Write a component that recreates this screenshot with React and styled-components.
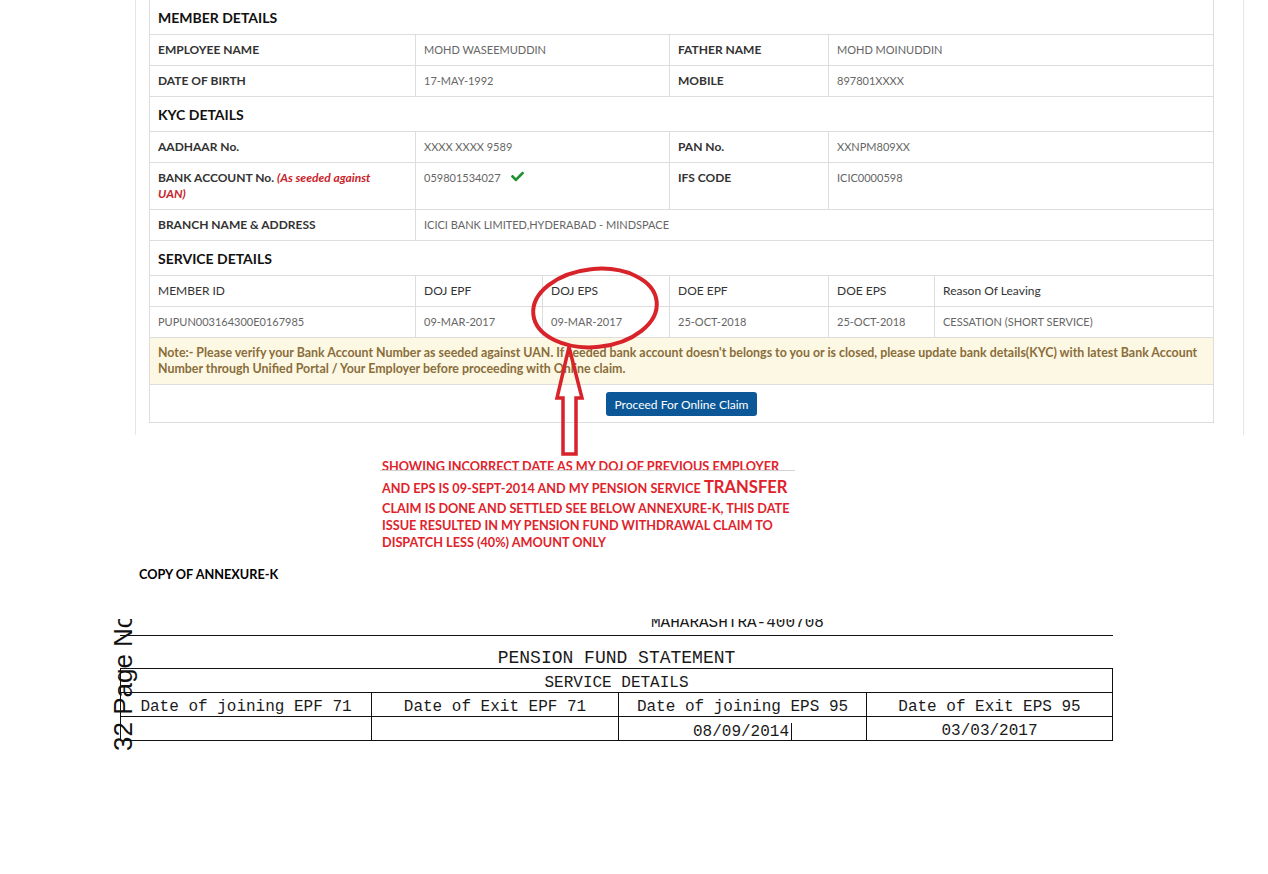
import React from "react";
import styled, { createGlobalStyle } from "styled-components";
import { FaCheck } from "react-icons/fa";

const Global = createGlobalStyle`
  html, body { margin: 0; padding: 0; background: #fff; }
  body { font-family: Lato, "Open Sans", sans-serif; }
  * { box-sizing: content-box; }
`;

const Canvas = styled.div`
  position: relative;
  width: 1268px;
  height: 874px;
  overflow: hidden;
  background: #fff;
`;

const TopPage = styled.div`
  margin-left: 135px;
  width: 1065px;
  border-left: 1px solid #e6e6e6;
  border-right: 1px solid #e6e6e6;
  padding: 0 29px 12px 13px;
`;

const Panel = styled.div`
  border: 1px solid #ddd;
  border-top: none;
  font-size: 12px;
`;

const SectionHead = styled.div`
  height: 34px;
  padding: 0 8px;
  display: flex;
  align-items: center;
  font-weight: 700;
  font-size: 14px;
  color: #111;
  border-top: ${(p) => (p.$first ? "none" : "1px solid #ddd")};
`;

const Row = styled.div`
  display: grid;
  grid-template-columns: ${(p) => p.$cols};
  border-top: 1px solid #ddd;
`;

const Cell = styled.div`
  padding: 7px 8px;
  line-height: 16px;
  font-size: ${(p) => (p.$kind === "label" || p.$kind === "head" ? 12 : 11)}px;
  font-weight: ${(p) => (p.$kind === "label" ? 700 : 400)};
  color: ${(p) =>
    p.$kind === "label" ? "#333" : p.$kind === "head" ? "#333" : "#666"};
  grid-column: ${(p) => p.$span || "auto"};
  white-space: nowrap;
  & + & {
    border-left: 1px solid #ddd;
  }
`;

const Seeded = styled.span`
  color: #c9232b;
  font-style: italic;
`;

const Tick = styled(FaCheck)`
  color: #21912f;
  margin-left: 10px;
  vertical-align: -1px;
`;

const Note = styled.div`
  border-top: 1px solid #ddd;
  background: #fcf8e3;
  padding: 7px 8px;
  line-height: 16px;
  font-size: 12.4px;
  font-weight: 700;
  color: #8a6d3b;
  white-space: nowrap;
`;

const ButtonRow = styled.div`
  border-top: 1px solid #ddd;
  padding: 7px 0 6px;
  display: flex;
  justify-content: center;
`;

const ClaimButton = styled.button`
  height: 24px;
  width: 151px;
  padding: 0;
  border: none;
  border-radius: 3px;
  background: #0b5797;
  color: #fff;
  font-family: Lato, "Open Sans", sans-serif;
  font-size: 12px;
`;

const Annotation = styled.div`
  position: relative;
  margin: 23px 0 0 382px;
  color: #e0232b;
  font-weight: 700;
  font-size: 12.7px;
`;

const AnnLine = styled.div`
  height: ${(p) => p.$h || 17}px;
  line-height: ${(p) => p.$h || 17}px;
  white-space: nowrap;
`;

const Big = styled.span`
  font-size: 16.6px;
`;

const StrikeLine = styled.div`
  position: absolute;
  left: -2px;
  top: 12px;
  width: 415px;
  height: 1px;
  background: #d2d2d2;
`;

const CopyTitle = styled.div`
  margin: 15px 0 0 139px;
  line-height: 17px;
  font-size: 12.7px;
  font-weight: 700;
  color: #000;
`;

const Scan = styled.div`
  position: relative;
  margin-top: 36px;
  height: 255px;
  overflow: hidden;
  font-family: "Liberation Mono", "Courier New", monospace;
  color: #1a1a1a;
`;

const ScanBody = styled.div`
  margin-left: 120px;
  width: 993px;
`;

const AddressLine = styled.div`
  margin-top: -5px;
  padding: 0 0 3px 531px;
  height: 18px;
  font-size: 16px;
  line-height: 18px;
  border-bottom: 1px solid #111;
`;

const StatementTitle = styled.div`
  padding-top: 12px;
  height: 20px;
  text-align: center;
  font-size: 18px;
  line-height: 20px;
`;

const ScanTable = styled.div`
  border: 1px solid #111;
  font-size: 16px;
`;

const ScanRow = styled.div`
  display: grid;
  grid-template-columns: ${(p) => p.$cols || "1fr"};
  & + & {
    border-top: 1px solid #111;
  }
`;

const ScanCell = styled.div`
  height: ${(p) => 23 - (p.$pt ?? 6)}px;
  padding-top: ${(p) => p.$pt ?? 6}px;
  line-height: 17px;
  text-align: center;
  white-space: nowrap;
  & + & {
    border-left: 1px solid #111;
  }
`;

const Caret = styled.span`
  display: inline-block;
  width: 0;
  height: 17px;
  margin-left: 2px;
  border-left: 1px solid #111;
  vertical-align: -4px;
`;

const PageStamp = styled.div`
  position: absolute;
  left: 110px;
  top: -18px;
  width: 26px;
  height: 150px;
  writing-mode: vertical-rl;
  transform: rotate(180deg);
  font-family: "Liberation Sans", Arial, sans-serif;
  font-size: 26px;
  line-height: 26px;
  white-space: nowrap;
  color: #111;
`;

const Markup = styled.svg`
  position: absolute;
  left: 0;
  top: 0;
  pointer-events: none;
`;

const FOUR = "265px 254px 159px 1fr";
const SIX = "265px 127px 127px 159px 106px 1fr";

export default function App() {
  return (
    <Canvas>
      <Global />
      <TopPage>
        <Panel>
          <SectionHead $first>MEMBER DETAILS</SectionHead>
          <Row $cols={FOUR}>
            <Cell $kind="label">EMPLOYEE NAME</Cell>
            <Cell>MOHD WASEEMUDDIN</Cell>
            <Cell $kind="label">FATHER NAME</Cell>
            <Cell>MOHD MOINUDDIN</Cell>
          </Row>
          <Row $cols={FOUR}>
            <Cell $kind="label">DATE OF BIRTH</Cell>
            <Cell>17-MAY-1992</Cell>
            <Cell $kind="label">MOBILE</Cell>
            <Cell>897801XXXX</Cell>
          </Row>
          <SectionHead>KYC DETAILS</SectionHead>
          <Row $cols={FOUR}>
            <Cell $kind="label">AADHAAR No.</Cell>
            <Cell>XXXX XXXX 9589</Cell>
            <Cell $kind="label">PAN No.</Cell>
            <Cell>XXNPM809XX</Cell>
          </Row>
          <Row $cols={FOUR}>
            <Cell $kind="label">
              BANK ACCOUNT No. <Seeded>(As seeded against</Seeded>
              <br />
              <Seeded>UAN)</Seeded>
            </Cell>
            <Cell>
              059801534027
              <Tick size={13} />
            </Cell>
            <Cell $kind="label">IFS CODE</Cell>
            <Cell>ICIC0000598</Cell>
          </Row>
          <Row $cols={FOUR}>
            <Cell $kind="label">BRANCH NAME &amp; ADDRESS</Cell>
            <Cell $span="2 / 5">ICICI BANK LIMITED,HYDERABAD - MINDSPACE</Cell>
          </Row>
          <SectionHead>SERVICE DETAILS</SectionHead>
          <Row $cols={SIX}>
            <Cell $kind="head">MEMBER ID</Cell>
            <Cell $kind="head">DOJ EPF</Cell>
            <Cell $kind="head">DOJ EPS</Cell>
            <Cell $kind="head">DOE EPF</Cell>
            <Cell $kind="head">DOE EPS</Cell>
            <Cell $kind="head">Reason Of Leaving</Cell>
          </Row>
          <Row $cols={SIX}>
            <Cell>PUPUN003164300E0167985</Cell>
            <Cell>09-MAR-2017</Cell>
            <Cell>09-MAR-2017</Cell>
            <Cell>25-OCT-2018</Cell>
            <Cell>25-OCT-2018</Cell>
            <Cell>CESSATION (SHORT SERVICE)</Cell>
          </Row>
          <Note>
            Note:- Please verify your Bank Account Number as seeded against UAN. If seeded bank account doesn't belongs to you or is closed, please update bank details(KYC) with latest Bank Account
            <br />
            Number through Unified Portal / Your Employer before proceeding with Online claim.
          </Note>
          <ButtonRow>
            <ClaimButton type="button">Proceed For Online Claim</ClaimButton>
          </ButtonRow>
        </Panel>
      </TopPage>

      <Annotation>
        <StrikeLine />
        <AnnLine>SHOWING INCORRECT DATE AS MY DOJ OF PREVIOUS EMPLOYER</AnnLine>
        <AnnLine $h={25}>
          AND EPS IS 09-SEPT-2014 AND MY PENSION SERVICE <Big>TRANSFER</Big>
        </AnnLine>
        <AnnLine>CLAIM IS DONE AND SETTLED SEE BELOW ANNEXURE-K, THIS DATE</AnnLine>
        <AnnLine>ISSUE RESULTED IN MY PENSION FUND WITHDRAWAL CLAIM TO</AnnLine>
        <AnnLine>DISPATCH LESS (40%) AMOUNT ONLY</AnnLine>
      </Annotation>

      <CopyTitle>COPY OF ANNEXURE-K</CopyTitle>

      <Scan>
        <ScanBody>
          <AddressLine>MAHARASHTRA-400708</AddressLine>
          <StatementTitle>PENSION FUND STATEMENT</StatementTitle>
          <ScanTable>
            <ScanRow>
              <ScanCell>SERVICE DETAILS</ScanCell>
            </ScanRow>
            <ScanRow $cols="250px 247px 248px 1fr">
              <ScanCell>Date of joining EPF 71</ScanCell>
              <ScanCell>Date of Exit EPF 71</ScanCell>
              <ScanCell>Date of joining EPS 95</ScanCell>
              <ScanCell>Date of Exit EPS 95</ScanCell>
            </ScanRow>
            <ScanRow $cols="250px 247px 248px 1fr">
              <ScanCell $pt={6}></ScanCell>
              <ScanCell $pt={6}></ScanCell>
              <ScanCell $pt={6}>
                08/09/2014
                <Caret />
              </ScanCell>
              <ScanCell $pt={6}>03/03/2017</ScanCell>
            </ScanRow>
          </ScanTable>
        </ScanBody>
        <PageStamp>32 Page No</PageStamp>
      </Scan>

      <Markup width="1268" height="874" viewBox="0 0 1268 874">
        <ellipse
          cx="595"
          cy="308"
          rx="62"
          ry="39"
          transform="rotate(-6 595 308)"
          fill="none"
          stroke="#d8232b"
          strokeWidth="4"
        />
        <polygon
          points="569,347 582,398 576,398 576,454 563,454 563,398 557,398"
          fill="none"
          stroke="#d8232b"
          strokeWidth="3.5"
          strokeLinejoin="miter"
        />
      </Markup>
    </Canvas>
  );
}
